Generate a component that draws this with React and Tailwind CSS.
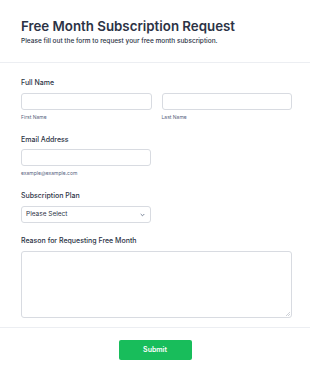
import React from "react";

export default function App() {
  return (
    <div className="w-[310px] h-[377px] bg-white overflow-hidden text-[#2c3345]" style={{ fontFamily: "Inter, 'Liberation Sans', sans-serif" }}>
      <div className="px-[21px] pt-[17px] h-[63px] border-b border-[#eceef2]">
        <h1 className="text-[13.3px] leading-[18px] font-semibold">Free Month Subscription Request</h1>
        <p className="text-[6.5px] leading-[10px] font-medium mt-[1px] text-[#2c3345]">Please fill out the form to request your free month subscription.</p>
      </div>
      <div className="pl-[21px] pr-[18px] pt-[15px] h-[265px] border-b border-[#eceef2]">
        <label className="block text-[7px] leading-[10px] font-medium">Full Name</label>
        <div className="flex gap-[10px] mt-[5px]">
          <div className="flex-1">
            <div className="h-[17px] border border-[#d8dbe1] rounded-[3px]"></div>
            <div className="text-[5px] leading-[8px] mt-[3px] text-[#57647e]">First Name</div>
          </div>
          <div className="flex-1">
            <div className="h-[17px] border border-[#d8dbe1] rounded-[3px]"></div>
            <div className="text-[5px] leading-[8px] mt-[3px] text-[#57647e]">Last Name</div>
          </div>
        </div>
        <label className="block text-[7px] leading-[10px] font-medium mt-[14px]">Email Address</label>
        <div className="w-[130px] mt-[4px]">
          <div className="h-[17px] border border-[#d8dbe1] rounded-[3px]"></div>
          <div className="text-[5px] leading-[8px] mt-[3px] text-[#57647e]">example@example.com</div>
        </div>
        <label className="block text-[7px] leading-[10px] font-medium mt-[14px]">Subscription Plan</label>
        <div className="w-[130px] h-[17px] mt-[5px] border border-[#d8dbe1] rounded-[3px] flex items-center justify-between pl-[4px] pr-[5px]">
          <span className="text-[6.5px] text-[#2c3345]">Please Select</span>
          <svg width="5" height="4" viewBox="0 0 5 4"><path d="M0.7 1 L2.5 2.8 L4.3 1" stroke="#57647e" strokeWidth="0.8" fill="none" /></svg>
        </div>
        <label className="block text-[7px] leading-[10px] font-medium mt-[13px]">Reason for Requesting Free Month</label>
        <div className="relative h-[67px] mt-[5px] border border-[#d8dbe1] rounded-[3px]">
          <svg className="absolute right-[1px] bottom-[1px]" width="4" height="4" viewBox="0 0 4 4"><path d="M4 0 L0 4 M4 2 L2 4" stroke="#b0b5c0" strokeWidth="0.6" /></svg>
        </div>
      </div>
      <div className="flex justify-center pt-[12px]">
        <button className="w-[73px] h-[20px] bg-[#18bd5b] rounded-[2px] text-white text-[7px] font-semibold">Submit</button>
      </div>
    </div>
  );
}
